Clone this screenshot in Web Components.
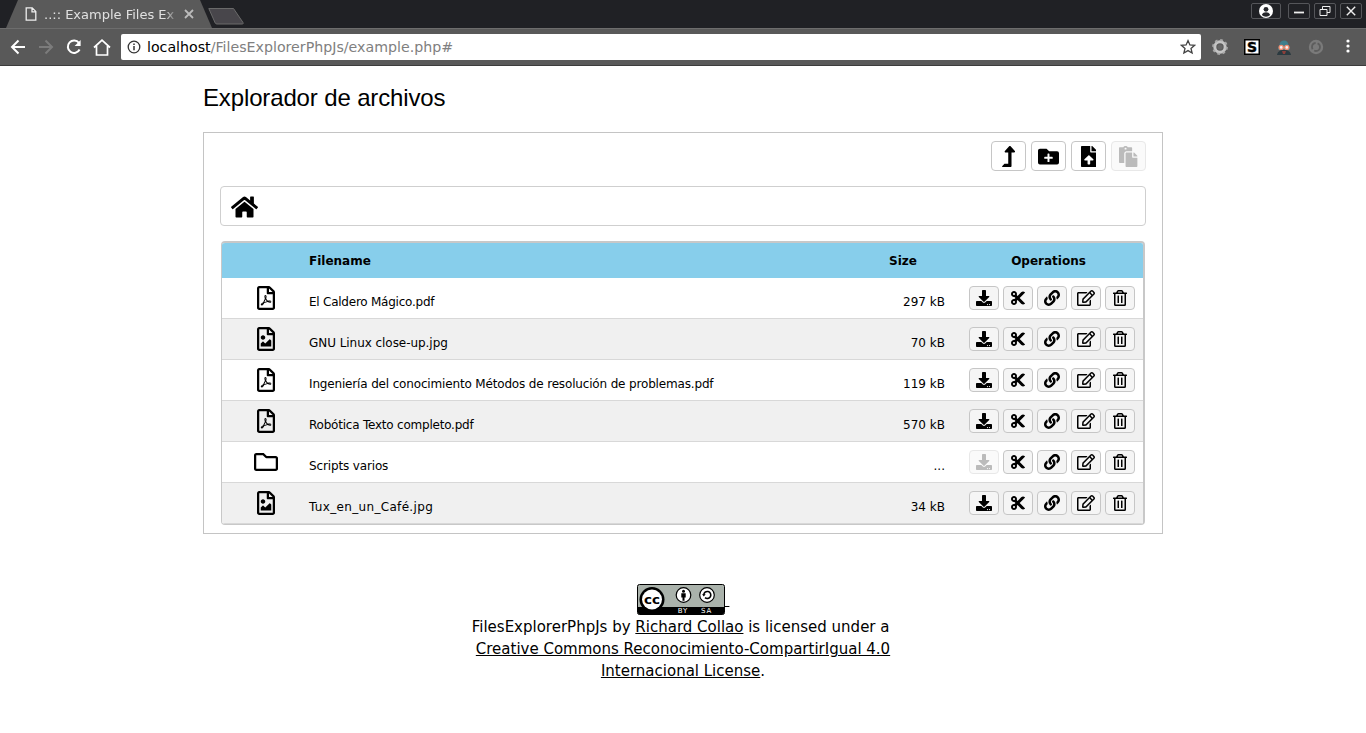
<!DOCTYPE html>
<html lang="es">
<head>
<meta charset="utf-8">
<title>..:: Example Files Explorer</title>
<style>
  body { margin: 0; background: #fff; color: #000; font-family: "DejaVu Sans", sans-serif; }
</style>
</head>
<body>
<x-browser-chrome></x-browser-chrome>
<x-explorer heading="Explorador de archivos">
  <x-file-row kind="pdf" name="El Caldero Mágico.pdf" size="297 kB" tracking="-.24"></x-file-row>
  <x-file-row kind="image" name="GNU Linux close-up.jpg" size="70 kB" tracking="-.05"></x-file-row>
  <x-file-row kind="pdf" name="Ingeniería del conocimiento Métodos de resolución de problemas.pdf" size="119 kB" tracking="-.16"></x-file-row>
  <x-file-row kind="pdf" name="Robótica Texto completo.pdf" size="570 kB" tracking="-.22"></x-file-row>
  <x-file-row kind="folder" name="Scripts varios" size="..." tracking="-.14"></x-file-row>
  <x-file-row kind="image" name="Tux_en_un_Café.jpg" size="34 kB" tracking=".33"></x-file-row>
</x-explorer>
<x-license-footer></x-license-footer>

<script>
const ICONS = {
  home: [576, 'M280.37 148.26L96 300.11V464a16 16 0 0 0 16 16l112.06-.29a16 16 0 0 0 15.92-16V368a16 16 0 0 1 16-16h64a16 16 0 0 1 16 16v95.64a16 16 0 0 0 16 16.05L464 480a16 16 0 0 0 16-16V300L295.67 148.26a12.19 12.19 0 0 0-15.3 0zM571.6 251.47L488 182.56V44.05a12 12 0 0 0-12-12h-56a12 12 0 0 0-12 12v72.61L318.47 43a48 48 0 0 0-61 0L4.34 251.47a12 12 0 0 0-1.6 16.9l25.5 31A12 12 0 0 0 45.15 301l235.22-193.74a12.19 12.19 0 0 1 15.3 0L530.9 301a12 12 0 0 0 16.9-1.6l25.5-31a12 12 0 0 0-1.7-16.93z'],
  up: [320, 'M313.553 119.669L209.587 7.666c-9.485-10.214-25.676-10.229-35.174 0L70.438 119.669C56.232 134.969 67.062 160 88.025 160H152v272H68.024a11.996 11.996 0 0 0-8.485 3.515l-56 56C-4.021 499.074 1.333 512 12.024 512H208c13.255 0 24-10.745 24-24V160h64c20.878 0 31.851-24.969 17.553-40.331z'],
  folderPlus: [512, 'M464,128H272L208,64H48A48,48,0,0,0,0,112V400a48,48,0,0,0,48,48H464a48,48,0,0,0,48-48V176A48,48,0,0,0,464,128ZM359.5,296a16,16,0,0,1-16,16h-64v64a16,16,0,0,1-16,16h-16a16,16,0,0,1-16-16V312h-64a16,16,0,0,1-16-16V280a16,16,0,0,1,16-16h64V200a16,16,0,0,1,16-16h16a16,16,0,0,1,16,16v64h64a16,16,0,0,1,16,16Z'],
  upload: [384, 'M224 136V0H24C10.7 0 0 10.7 0 24v464c0 13.3 10.7 24 24 24h336c13.3 0 24-10.7 24-24V160H248c-13.2 0-24-10.8-24-24zm65.18 216.01H224v80c0 8.84-7.16 16-16 16h-32c-8.84 0-16-7.16-16-16v-80H94.82c-14.28 0-21.41-17.29-11.27-27.36l96.42-95.7c6.65-6.61 17.39-6.61 24.04 0l96.42 95.7c10.15 10.07 3.03 27.36-11.25 27.36zM377 105L279.1 7c-4.5-4.5-10.6-7-17-7H256v128h128v-6.1c0-6.3-2.5-12.4-7-16.9z'],
  paste: [448, 'M128 184c0-30.879 25.122-56 56-56h136V56c0-13.255-10.745-24-24-24h-80.61C204.306 12.89 183.637 0 160 0s-44.306 12.89-55.39 32H24C10.745 32 0 42.745 0 56v336c0 13.255 10.745 24 24 24h104V184zm32-144c13.255 0 24 10.745 24 24s-10.745 24-24 24-24-10.745-24-24 10.745-24 24-24zm184 248h104v200c0 13.255-10.745 24-24 24H184c-13.255 0-24-10.745-24-24V184c0-13.255 10.745-24 24-24h136v104c0 13.2 10.8 24 24 24zm104-38.059V256h-96v-96h6.059a24 24 0 0 1 16.97 7.029l65.941 65.941a24.002 24.002 0 0 1 7.03 16.971z'],
  download: [512, 'M216 0h80c13.3 0 24 10.7 24 24v168h87.7c17.8 0 26.7 21.5 14.1 34.1L269.7 378.3c-7.5 7.5-19.8 7.5-27.3 0L90.1 226.1c-12.6-12.6-3.7-34.1 14.1-34.1H192V24c0-13.3 10.7-24 24-24zm296 376v112c0 13.3-10.7 24-24 24H24c-13.3 0-24-10.7-24-24V376c0-13.3 10.7-24 24-24h146.7l49 49c20.1 20.1 52.5 20.1 72.6 0l49-49H488c13.3 0 24 10.7 24 24zm-124 88c0-11-9-20-20-20s-20 9-20 20 9 20 20 20 20-9 20-20zm64 0c0-11-9-20-20-20s-20 9-20 20 9 20 20 20 20-9 20-20z'],
  cut: [448, 'M278.06 256L444.48 89.57c4.69-4.69 4.69-12.29 0-16.97-32.8-32.8-85.99-32.8-118.79 0L210.18 188.12l-24.86-24.86c4.31-10.92 6.68-22.81 6.68-35.26 0-53.02-42.98-96-96-96S0 74.98 0 128s42.98 96 96 96c4.54 0 8.99-.32 13.36-.93L142.29 256l-32.93 32.93c-4.37-.61-8.83-.93-13.36-.93-53.02 0-96 42.98-96 96s42.98 96 96 96 96-42.98 96-96c0-12.45-2.37-24.34-6.68-35.26l24.86-24.86L325.69 439.4c32.8 32.8 85.99 32.8 118.79 0 4.69-4.68 4.69-12.28 0-16.97L278.06 256zM96 160c-17.64 0-32-14.36-32-32s14.36-32 32-32 32 14.36 32 32-14.36 32-32 32zm0 256c-17.64 0-32-14.36-32-32s14.36-32 32-32 32 14.36 32 32-14.36 32-32 32z'],
  link: [512, 'M326.612 185.391c59.747 59.809 58.927 155.698.36 214.59-.11.12-.24.25-.36.37l-67.2 67.2c-59.27 59.27-155.699 59.262-214.96 0-59.27-59.26-59.27-155.7 0-214.96l37.106-37.106c9.84-9.84 26.786-3.3 27.294 10.606.648 17.722 3.826 35.527 9.69 52.721 1.986 5.822.567 12.262-3.783 16.612l-13.087 13.087c-28.026 28.026-28.905 73.66-1.155 101.96 28.024 28.579 74.086 28.749 102.325.51l67.2-67.19c28.191-28.191 28.073-73.757 0-101.83-3.701-3.694-7.429-6.564-10.341-8.569a16.037 16.037 0 0 1-6.947-12.606c-.396-10.567 3.348-21.456 11.698-29.806l21.054-21.055c5.521-5.521 14.182-6.199 20.584-1.731a152.482 152.482 0 0 1 20.522 17.197zM467.547 44.449c-59.261-59.262-155.69-59.27-214.96 0l-67.2 67.2c-.12.12-.25.25-.36.37-58.566 58.892-59.387 154.781.36 214.59a152.454 152.454 0 0 0 20.521 17.196c6.402 4.468 15.064 3.789 20.584-1.731l21.054-21.055c8.35-8.35 12.094-19.239 11.698-29.806a16.037 16.037 0 0 0-6.947-12.606c-2.912-2.005-6.64-4.875-10.341-8.569-28.073-28.073-28.191-73.639 0-101.83l67.2-67.19c28.239-28.239 74.3-28.069 102.325.51 27.75 28.3 26.872 73.934-1.155 101.96l-13.087 13.087c-4.35 4.35-5.769 10.79-3.783 16.612 5.864 17.194 9.042 34.999 9.69 52.721.509 13.906 17.454 20.446 27.294 10.606l37.106-37.106c59.271-59.259 59.271-155.699.001-214.959z'],
  edit: [576, 'M402.3 344.9l32-32c5-5 13.7-1.5 13.7 5.7V464c0 26.5-21.5 48-48 48H48c-26.5 0-48-21.5-48-48V112c0-26.5 21.5-48 48-48h273.5c7.1 0 10.7 8.6 5.7 13.7l-32 32c-1.5 1.5-3.5 2.3-5.7 2.3H48v352h352V350.5c0-2.1.8-4.1 2.3-5.6zm156.6-201.8L296.3 405.7l-90.4 10c-26.2 2.9-48.5-19.2-45.6-45.6l10-90.4L432.9 17.1c22.9-22.9 59.9-22.9 82.7 0l43.2 43.2c22.9 22.9 22.9 60 .1 82.8zM460.1 174L402 115.9 216.2 301.8l-7.3 65.3 65.3-7.3L460.1 174zm64.8-79.7l-43.2-43.2c-4.1-4.1-10.8-4.1-14.8 0L436 82l58.1 58.1 30.9-30.9c4-4.2 4-10.8-.1-14.9z'],
  trash: [448, 'M268 416h24a12 12 0 0 0 12-12V188a12 12 0 0 0-12-12h-24a12 12 0 0 0-12 12v216a12 12 0 0 0 12 12zM432 80h-82.41l-34-56.7A48 48 0 0 0 274.41 0H173.59a48 48 0 0 0-41.16 23.3L98.41 80H16A16 16 0 0 0 0 96v16a16 16 0 0 0 16 16h16v336a48 48 0 0 0 48 48h288a48 48 0 0 0 48-48V128h16a16 16 0 0 0 16-16V96a16 16 0 0 0-16-16zM171.84 50.91A6 6 0 0 1 177 48h94a6 6 0 0 1 5.15 2.91L293.61 80H154.39zM368 464H80V128h288zm-212-48h24a12 12 0 0 0 12-12V188a12 12 0 0 0-12-12h-24a12 12 0 0 0-12 12v216a12 12 0 0 0 12 12z'],
  folder: [512, 'M464 128H272l-54.63-54.63c-6-6-14.14-9.37-22.63-9.37H48C21.49 64 0 85.49 0 112v288c0 26.51 21.49 48 48 48h416c26.51 0 48-21.49 48-48V176c0-26.51-21.49-48-48-48zm0 272H48V112h140.12l54.63 54.63c6 6 14.14 9.37 22.63 9.37H464v224z'],
  image: [384, 'M369.9 97.9L286 14C277 5 264.8-.1 252.1-.1H48C21.5 0 0 21.5 0 48v416c0 26.5 21.5 48 48 48h288c26.5 0 48-21.5 48-48V131.9c0-12.7-5.1-25-14.1-34zM332.1 128H256V51.9l76.1 76.1zM48 464V48h160v104c0 13.3 10.7 24 24 24h104v288H48zm32-48h224V288l-23.5-23.5c-4.7-4.7-12.3-4.7-17 0L176 352l-39.5-39.5c-4.7-4.7-12.3-4.7-17 0L80 352v64zm48-240c-26.5 0-48 21.5-48 48s21.5 48 48 48 48-21.5 48-48-21.5-48-48-48z'],
  pdf: [384, 'M369.9 97.9L286 14C277 5 264.8-.1 252.1-.1H48C21.5 0 0 21.5 0 48v416c0 26.5 21.5 48 48 48h288c26.5 0 48-21.5 48-48V131.9c0-12.7-5.1-25-14.1-34zM332.1 128H256V51.9l76.1 76.1zM48 464V48h160v104c0 13.3 10.7 24 24 24h104v288H48zm250.2-143.7c-12.2-12-47-8.7-64.4-6.5-17.2-10.5-28.7-25-36.8-46.3 3.9-16.1 10.1-40.6 5.4-56-4.2-26.2-37.8-23.6-42.6-5.9-4.4 16.1-.4 38.5 7 67.1-10 23.9-24.9 56-35.4 74.4-20 10.3-47 26.2-51 46.2-3.3 15.8 26 55.2 76.1-31.2 22.4-7.4 46.8-16.5 68.4-20.1 18.9 10.2 41 17 55.8 17 25.5 0 28-28.2 17.5-38.7zm-198.1 77.8c5.1-13.7 24.5-29.5 30.4-35-19 30.3-30.4 35.7-30.4 35zm81.6-190.6c7.4 0 6.7 32.1 1.8 40.8-4.4-13.9-4.3-40.8-1.8-40.8zm-24.4 136.6c9.7-16.9 18-37 24.7-54.7 8.3 15.1 18.9 27.2 30.1 35.5-20.8 4.3-38.9 13.1-54.8 19.2zm131.6-5s-5 6-37.3-7.8c35.1-2.6 40.9 5.4 37.3 7.8z'],
};

class FaIcon extends HTMLElement {
  static get observedAttributes() { return ['name', 'size']; }
  static registerCustomElement() {
    window.customElements.define('x-fa', FaIcon);
  }
  constructor() {
    super();
    this.attachShadow({ mode: 'open' });
  }
  attributeChangedCallback() {
    // the name may come after the element is in place, so draw on each change
    const icon = ICONS[this.getAttribute('name')];
    if (!icon) { return; }
    const [width, d] = icon;
    const size = Number(this.getAttribute('size') || 16);
    this.shadowRoot.innerHTML = `
      <style>
        :host { display: block; line-height: 0; }
        svg { display: block; fill: currentColor; }
      </style>
      <svg width="${size * width / 512}" height="${size}" viewBox="0 0 ${width} 512"><path d="${d}"/></svg>
    `;
  }
}

class IconButton extends HTMLElement {
  static registerCustomElement() {
    IconButton.template = document.createElement('template');
    IconButton.template.innerHTML = `
      <style>
        :host {
          display: flex;
          align-items: center;
          justify-content: center;
          box-sizing: border-box;
          background: #f5f5f5;
          border: 1px solid #c6c6c6;
          border-radius: 4px;
          color: #000;
        }
        :host([big]) { width: 35px; height: 30px; background: #fff; }
        :host([small]) { width: 30px; height: 24px; }
        :host([disabled]) { color: #bbb; border-color: #e8e8e8; background: #fafafa; }
      </style>
      <x-fa></x-fa>
    `;
    window.customElements.define('x-icon-button', IconButton);
  }
  connectedCallback() {
    if (this.shadowRoot) { return; }
    const shadowRoot = this.attachShadow({ mode: 'open' });
    shadowRoot.appendChild(IconButton.template.content.cloneNode(true));
    const icon = shadowRoot.querySelector('x-fa');
    icon.setAttribute('size', this.hasAttribute('big') ? 21 : 16);
    icon.setAttribute('name', this.getAttribute('icon'));
  }
}

class FileRow extends HTMLElement {
  static registerCustomElement() {
    FileRow.template = document.createElement('template');
    FileRow.template.innerHTML = `
      <style>
        :host {
          display: grid;
          grid-template-columns: 87px 1fr 84px 198px;
          align-items: center;
          height: 41px;
          box-sizing: border-box;
          border-bottom: 1px solid #d8d8d8;
          font-size: 12px;
        }
        :host(:nth-child(even)) { background: #f0f0f0; }
        .kind { display: flex; justify-content: center; }
        .name, .size { padding-top: 7px; white-space: nowrap; }
        .size { text-align: right; }
        .ops { display: flex; gap: 4px; justify-content: flex-end; padding-right: 8px; padding-bottom: 1px; }
      </style>
      <div class="kind"><x-fa size="24"></x-fa></div>
      <div class="name"></div>
      <div class="size"></div>
      <div class="ops">
        <x-icon-button small icon="download"></x-icon-button>
        <x-icon-button small icon="cut"></x-icon-button>
        <x-icon-button small icon="link"></x-icon-button>
        <x-icon-button small icon="edit"></x-icon-button>
        <x-icon-button small icon="trash"></x-icon-button>
      </div>
    `;
    window.customElements.define('x-file-row', FileRow);
  }
  connectedCallback() {
    if (this.shadowRoot) { return; }
    const shadowRoot = this.attachShadow({ mode: 'open' });
    shadowRoot.appendChild(FileRow.template.content.cloneNode(true));
    const kind = this.getAttribute('kind');
    const name = shadowRoot.querySelector('.name');
    shadowRoot.querySelector('.kind x-fa').setAttribute('name', kind);
    name.textContent = this.getAttribute('name');
    name.style.letterSpacing = `${this.getAttribute('tracking') || 0}px`;
    shadowRoot.querySelector('.size').textContent = this.getAttribute('size');
    if (kind === 'folder') {
      shadowRoot.querySelector('x-icon-button').setAttribute('disabled', '');
    }
  }
}

class Explorer extends HTMLElement {
  static registerCustomElement() {
    Explorer.template = document.createElement('template');
    Explorer.template.innerHTML = `
      <style>
        :host { display: block; width: 960px; margin: 0 auto; }
        h1 {
          margin: 0;
          height: 66px;
          box-sizing: border-box;
          padding-bottom: 2px;
          display: flex;
          align-items: center;
          font: 400 24px "Liberation Sans", Arial, sans-serif;
          letter-spacing: -.14px;
        }
        .panel {
          box-sizing: border-box;
          border: 1px solid #c4c4c4;
          padding: 8px 16px;
          display: flex;
          flex-direction: column;
          gap: 15px;
        }
        .tools { display: flex; justify-content: flex-end; gap: 5px; }
        .crumbs {
          height: 40px;
          box-sizing: border-box;
          border: 1px solid #cfcfcf;
          border-radius: 4px;
          padding: 2px 10px 0;
          display: flex;
          align-items: center;
        }
        .table {
          box-sizing: border-box;
          margin: 0 1px;
          border: 1px solid #c8c8c8;
          border-top-width: 2px;
          border-right-width: 2px;
          border-radius: 4px;
          overflow: hidden;
        }
        .head {
          display: grid;
          grid-template-columns: 87px 1fr 84px 198px;
          align-items: center;
          height: 35px;
          padding-top: 1px;
          box-sizing: border-box;
          background: #87ceeb;
          font: 700 12px "DejaVu Sans", sans-serif;
        }
        .head .size { text-align: center; }
        .head .ops { text-align: center; padding-left: 9px; }
      </style>
      <h1></h1>
      <div class="panel">
        <div class="tools">
          <x-icon-button big icon="up"></x-icon-button>
          <x-icon-button big icon="folderPlus"></x-icon-button>
          <x-icon-button big icon="upload"></x-icon-button>
          <x-icon-button big disabled icon="paste"></x-icon-button>
        </div>
        <div class="crumbs"><x-fa name="home" size="24"></x-fa></div>
        <div class="table">
          <div class="head">
            <div></div>
            <div>Filename</div>
            <div class="size">Size</div>
            <div class="ops">Operations</div>
          </div>
          <slot></slot>
        </div>
      </div>
    `;
    window.customElements.define('x-explorer', Explorer);
  }
  constructor() {
    super();
    const shadowRoot = this.attachShadow({ mode: 'open' });
    shadowRoot.appendChild(Explorer.template.content.cloneNode(true));
    shadowRoot.querySelector('h1').textContent = this.getAttribute('heading');
  }
}

class LicenseFooter extends HTMLElement {
  static registerCustomElement() {
    LicenseFooter.template = document.createElement('template');
    LicenseFooter.template.innerHTML = `
      <style>
        :host {
          display: block;
          margin-top: 50px;
          text-align: center;
          font: 15px/22px "DejaVu Sans", sans-serif;
        }
        a { color: #000; text-decoration: underline; }
        svg { vertical-align: middle; margin-bottom: 1px; }
        text { font-family: "DejaVu Sans", sans-serif; }
      </style>
      <a href="#"><svg width="88" height="31" viewBox="0 0 88 31">
        <rect x="0.5" y="0.5" width="87" height="30" rx="2" fill="#aab2ab" stroke="#000"/>
        <path d="M1 23H87V28.5a2 2 0 0 1-2 2H3a2 2 0 0 1-2-2z" fill="#000"/>
        <circle cx="15" cy="15.5" r="12.5" fill="#000"/>
        <circle cx="15" cy="15.500" r="10" fill="#fff"/>
        <text x="15" y="20" text-anchor="middle" font-size="13" font-weight="700" textLength="16" lengthAdjust="spacingAndGlyphs">cc</text>
        <circle cx="46.500" cy="11" r="7.300" fill="#fff" stroke="#000" stroke-width="1.200"/>
        <circle cx="46.500" cy="7.300" r="1.500" fill="#000"/>
        <path d="M44.300 9.300h4.400v4.200h-1.200v3.300h-2v-3.300h-1.200z" fill="#000"/>
        <circle cx="70" cy="11" r="7.300" fill="#fff" stroke="#000" stroke-width="1.200"/>
        <path d="M66.800 11a3.500 3.500 0 1 1 1.200 2.600" fill="none" stroke="#000" stroke-width="1.600"/>
        <path d="M65 10.300h3.700l-1.900 2.300z" fill="#000"/>
        <text x="46" y="29" text-anchor="middle" font-size="7" fill="#fff" letter-spacing=".8">BY</text>
        <text x="69.500" y="29" text-anchor="middle" font-size="7" fill="#fff" letter-spacing=".8">SA</text>
      </svg>&nbsp;</a><br>
      FilesExplorerPhpJs by <a href="#">Richard Collao</a> is licensed under a&nbsp;<br>
      <a href="#">Creative Commons Reconocimiento-CompartirIgual 4.0<br>Internacional License</a>.
    `;
    window.customElements.define('x-license-footer', LicenseFooter);
  }
  constructor() {
    super();
    this.attachShadow({ mode: 'open' }).appendChild(LicenseFooter.template.content.cloneNode(true));
  }
}

class BrowserChrome extends HTMLElement {
  static registerCustomElement() {
    BrowserChrome.template = document.createElement('template');
    BrowserChrome.template.innerHTML = `
      <style>
        :host { display: block; font-family: "DejaVu Sans", sans-serif; }
        svg { display: block; flex: none; }
        .strip {
          height: 28px;
          background: #202125;
          display: flex;
          align-items: flex-start;
          padding-left: 6px;
          padding-right: 4px;
        }
        .tab {
          width: 206px;
          height: 28px;
          background: #5a5a5a;
          clip-path: polygon(0 100%, 12px 0, 194px 0, 100% 100%);
          display: flex;
          align-items: center;
          padding-left: 19px;
          box-sizing: border-box;
          color: #e0e0e0;
        }
        .tab .title {
          width: 134px;
          margin-left: 7px;
          white-space: nowrap;
          font-size: 13px;
          -webkit-mask-image: linear-gradient(90deg, #000 90%, transparent);
          mask-image: linear-gradient(90deg, #000 90%, transparent);
        }
        .tab .close { margin-left: 6px; }
        .newtab { margin: 7px 0 0 -4px; }
        .win { margin-left: auto; display: flex; gap: 4px; padding-top: 3px; }
        .win div {
          width: 20px;
          height: 14px;
          border: 1px solid #55565a;
          border-radius: 2px;
          display: flex;
          align-items: center;
          justify-content: center;
        }
        .win .who { width: 28px; margin-right: 3px; }
        .bar {
          height: 38px;
          box-sizing: border-box;
          background: #595959;
          border-top: 1px solid #6d6d6d;
          border-bottom: 1px solid #3c3c3c;
          display: flex;
          align-items: center;
          padding-left: 4px;
        }
        .nav { width: 28px; display: flex; justify-content: center; }
        .url {
          margin-left: 5px;
          width: 1080px;
          height: 26px;
          background: #fff;
          border-radius: 2px;
          display: flex;
          align-items: center;
          box-sizing: border-box;
          padding: 0 5px 0 6px;
          font-size: 14.2px;
          color: #808080;
        }
        .url b { font-weight: 400; color: #000; }
        .url span { margin-left: 6px; flex: 1; }
        .ext { width: 32px; display: flex; justify-content: center; }
        .exts { display: flex; margin-left: 3px; }
      </style>
      <div class="strip">
        <div class="tab">
          <svg width="12" height="14" viewBox="0 0 12 14" fill="none" stroke="#eee" stroke-width="1.300"><path d="M1.200.8h6l3.600 3.600v8.800H1.200zM7 .8v4h3.800"/></svg>
          <div class="title">..:: Example Files Ex</div>
          <svg class="close" width="10" height="10" viewBox="0 0 10 10" stroke="#bbb" stroke-width="1.800"><path d="M1 1l8 8M9 1l-8 8"/></svg>
        </div>
        <svg class="newtab" width="36" height="18" viewBox="0 0 36 18"><path d="M.8 1.500h24.700l9.500 14a1 1 0 0 1-.8 1.500H9a2 2 0 0 1-1.800-1z" fill="#48464b" stroke="#6a6a6a"/></svg>
        <div class="win">
          <div class="who"><svg width="14" height="14" viewBox="0 0 14 14"><circle cx="7" cy="7" r="7" fill="#fff"/><circle cx="7" cy="5.300" r="2.400" fill="#26272b"/><path d="M2.800 11c.8-2 2.400-2.700 4.200-2.700s3.400.7 4.200 2.700a6 6 0 0 1-8.400 0z" fill="#26272b"/></svg></div>
          <div><svg width="12" height="10" viewBox="0 0 12 10"><path d="M1 6.500h10" stroke="#eee" stroke-width="1.800"/></svg></div>
          <div><svg width="12" height="10" viewBox="0 0 12 10" fill="none" stroke="#eee"><path d="M1 3.500h7v6H1zM3.500 3.500V.5h7.500v6H8"/></svg></div>
          <div><svg width="10" height="10" viewBox="0 0 10 10" stroke="#eee" stroke-width="1.400"><path d="M.8.8l8.400 8.400M9.200.8L.8 9.200"/></svg></div>
        </div>
      </div>
      <div class="bar">
        <div class="nav"><svg width="16" height="16" viewBox="0 0 16 16" fill="none" stroke="#fff" stroke-width="2"><path d="M15 8H2M8.500 1.500L2 8l6.500 6.500"/></svg></div>
        <div class="nav"><svg width="16" height="16" viewBox="0 0 16 16" fill="none" stroke="#7c7c7c" stroke-width="2"><path d="M1 8h13M7.500 1.500L14 8l-6.500 6.500"/></svg></div>
        <div class="nav"><svg width="16" height="16" viewBox="0 0 16 16" fill="none" stroke="#fff" stroke-width="2"><path d="M13.600 10.500A6.200 6.200 0 1 1 13 4"/><path d="M14.600 1v6h-6z" fill="#fff" stroke="none"/></svg></div>
        <div class="nav"><svg width="18" height="17" viewBox="0 0 18 17" fill="none" stroke="#fff" stroke-width="1.700"><path d="M1 8.500L9 1.200l8 7.300M3.500 7v9h11V7"/></svg></div>
        <div class="url">
          <svg width="14" height="14" viewBox="0 0 14 14" fill="none" stroke="#333" stroke-width="1.300"><circle cx="7" cy="7" r="5.800"/><path d="M7 6v4.200" stroke-width="1.500"/><path d="M7 3.400v1.500" stroke-width="1.500"/></svg>
          <span><b>localhost</b>/FilesExplorerPhpJs/example.php#</span>
          <svg width="16" height="16" viewBox="0 0 16 16" fill="none" stroke="#444" stroke-width="1.300"><path d="M8 1.600l1.900 4.300 4.700.4-3.600 3.100 1.100 4.600L8 11.600l-4.100 2.400L5 9.400 1.400 6.300l4.700-.4z"/></svg>
        </div>
        <div class="exts">
          <div class="ext"><svg width="16" height="16" viewBox="0 0 16 16"><circle cx="8" cy="8" r="5.200" fill="none" stroke="#c4c4c4" stroke-width="3"/><circle cx="8" cy="8" r="6.900" fill="none" stroke="#a8a8a8" stroke-width="2" stroke-dasharray="2.700 2.720"/><circle cx="8" cy="8" r="2.600" fill="#666"/></svg></div>
          <div class="ext"><svg width="16" height="16" viewBox="0 0 16 16"><rect width="16" height="16" fill="#000"/><rect x="1.500" y="1.500" width="13" height="13" fill="#fff"/><text x="8" y="13.200" text-anchor="middle" font-family="DejaVu Sans" font-size="14" font-weight="700" fill="#000" stroke="#000" stroke-width=".4">S</text></svg></div>
          <div class="ext"><svg width="16" height="16" viewBox="0 0 16 16"><path d="M3.500 6a4.500 4.500 0 0 1 9 0l1.500 5H2z" fill="#3f7f8c"/><path d="M1 16c.5-3 2.500-5 7-5s6.500 2 7 5z" fill="#2b3a40"/><path d="M6 12h4l-1 3H7z" fill="#8c3f3a"/><circle cx="5.200" cy="8.400" r="2.700" fill="#ef8f72"/><circle cx="10.800" cy="8.400" r="2.700" fill="#ef8f72"/><circle cx="5.200" cy="8.400" r="1.300" fill="#f2f2f2"/><circle cx="10.800" cy="8.400" r="1.300" fill="#f2f2f2"/></svg></div>
          <div class="ext"><svg width="16" height="16" viewBox="0 0 16 16" fill="none"><circle cx="8" cy="8" r="7.200" fill="#7a7a7a"/><circle cx="8" cy="8" r="4" stroke="#5d5d5d" stroke-width="1.800" stroke-dasharray="8 2"/></svg></div>
          <div class="ext"><svg width="4" height="14" viewBox="0 0 4 14" fill="#fff"><circle cx="2" cy="2" r="1.600"/><circle cx="2" cy="7" r="1.600"/><circle cx="2" cy="12" r="1.600"/></svg></div>
        </div>
      </div>
    `;
    window.customElements.define('x-browser-chrome', BrowserChrome);
  }
  constructor() {
    super();
    this.attachShadow({ mode: 'open' }).appendChild(BrowserChrome.template.content.cloneNode(true));
  }
}

[FaIcon, IconButton, FileRow, Explorer, LicenseFooter, BrowserChrome].forEach(x => x.registerCustomElement());
</script>
</body>
</html>
